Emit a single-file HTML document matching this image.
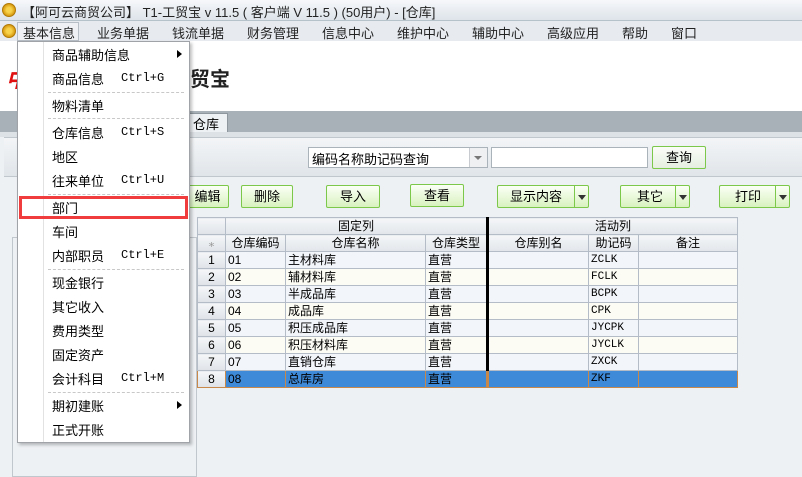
<!DOCTYPE html>
<html><head><meta charset="utf-8"><style>
*{margin:0;padding:0;box-sizing:border-box}
body{width:802px;height:477px;overflow:hidden;position:relative;font-family:"Liberation Sans","Noto Sans CJK SC","WenQuanYi Zen Hei",sans-serif;font-size:12px;color:#000;background:#eef1f4}
.a{position:absolute;white-space:nowrap}
.coin{width:14px;height:14px;border-radius:50%;background:radial-gradient(circle,#f7d24a 30%,#d89a10 70%);border:1px solid #b07a08}
.btn{position:absolute;height:23px;border:1px solid #7cc84a;border-radius:2px;background:linear-gradient(#fbfff6,#d8f2bf);text-align:center;line-height:21px;font-size:13px;white-space:nowrap}
.dd{position:absolute;top:0;right:0;width:14px;height:21px;border-left:1px solid #7cc84a}
.dd:after{content:"";position:absolute;left:3px;top:9px;border:4px solid transparent;border-top:5px solid #333}
table{border-collapse:collapse;position:absolute;left:197px;top:217px;font-size:12px;table-layout:fixed}
td{border:1px solid #b4bcc8;height:17px;line-height:15px;padding:0 2px;white-space:nowrap;overflow:hidden}
.h td{background:linear-gradient(#f4f6f8,#e2e6ea);text-align:center}
.r1 td{background:#f2f5fa}.r2 td{background:#fcfbf4}
.n{background:linear-gradient(#f4f6f8,#dfe3e8)!important;text-align:center}
.th{border-right:3px solid #000}
.sel td{background:#3f8ad8;border-color:#c8884a}
.mono{font-family:"Liberation Mono",monospace;font-size:11px}
.mi{position:absolute;left:52px;font-size:13px;white-space:nowrap}
.sc{position:absolute;left:121px;font-family:"Liberation Mono",monospace;font-size:12px;white-space:nowrap}
.sep{position:absolute;border-top:1px dashed #c8c8c8}
</style></head><body>
<div class="a" style="left:0;top:0;width:802px;height:21px;background:linear-gradient(#f6f8fa,#dde4ea);border-bottom:1px solid #b5c2ca"></div>
<div class="a coin" style="left:2px;top:3px"></div>
<div class="a" style="left:22px;top:2px;font-size:13px;color:#222">【阿可云商贸公司】 T1-工贸宝 v 11.5 ( 客户端 V 11.5 )  (50用户) - [仓库]</div>
<div class="a" style="left:0;top:21px;width:802px;height:20px;background:#e7ebf0"></div>
<div class="a coin" style="left:2px;top:24px"></div>
<div class="a" style="left:17px;top:22px;width:62px;height:19px;border:1px solid #b8bec6;background:#eef0f3"></div>
<div class="a" style="top:23px;left:0;font-size:13px;color:#222">
<span class="a" style="left:23px">基本信息</span><span class="a" style="left:97px">业务单据</span><span class="a" style="left:172px">钱流单据</span><span class="a" style="left:247px">财务管理</span><span class="a" style="left:322px">信息中心</span><span class="a" style="left:397px">维护中心</span><span class="a" style="left:472px">辅助中心</span><span class="a" style="left:547px">高级应用</span><span class="a" style="left:622px">帮助</span><span class="a" style="left:671px">窗口</span></div>
<div class="a" style="left:0;top:41px;width:802px;height:70px;background:#fff"></div>
<div class="a" style="left:6px;top:62px;color:#e01010;font-size:22px;font-weight:bold;font-style:italic">中</div>
<div class="a" style="left:190px;top:63px;font-size:20px;font-weight:bold;color:#222">贸宝</div>
<div class="a" style="left:0;top:111px;width:802px;height:21px;background:#a8b1b8"></div>
<div class="a" style="left:186px;top:113px;width:42px;height:19px;background:#eef1f4;border:1px solid #8e979e;border-bottom:none;font-size:13px;padding-left:6px">仓库</div>
<div class="a" style="left:0;top:132px;width:802px;height:5px;background:#dde2e6"></div>
<div class="a" style="left:4px;top:137px;width:798px;height:40px;background:linear-gradient(#f3f5f7,#e0e5e9);border-top:1px solid #c0c8ce;border-bottom:1px solid #c0c8ce"></div>
<div class="a" style="left:308px;top:147px;width:180px;height:21px;background:#fff;border:1px solid #aab2ba;font-size:13px;padding:1px 3px">编码名称助记码查询</div>
<div class="a" style="left:469px;top:148px;width:18px;height:19px;background:#eef0f2;border-left:1px solid #c8ccd0"></div>
<div class="a" style="left:474px;top:156px;border:4px solid transparent;border-top:4px solid #777"></div>
<div class="a" style="left:491px;top:147px;width:157px;height:21px;background:#fff;border:1px solid #aab2ba"></div>
<div class="btn" style="left:652px;top:146px;width:54px;background:linear-gradient(#fbfdf8,#e4eee0)">查询</div>
<div class="a" style="left:12px;top:237px;width:185px;height:240px;border:1px solid #c0c7cd;background:#eef1f4"></div>
<div class="btn" style="left:186px;top:185px;width:43px">编辑</div>
<div class="btn" style="left:241px;top:185px;width:52px">删除</div>
<div class="btn" style="left:326px;top:185px;width:54px">导入</div>
<div class="btn" style="left:410px;top:184px;width:54px">查看</div>
<div class="btn" style="left:497px;top:185px;width:92px;text-align:left;padding-left:12px">显示内容<span class="dd"></span></div>
<div class="btn" style="left:620px;top:185px;width:70px;text-align:left;padding-left:16px">其它<span class="dd"></span></div>
<div class="btn" style="left:719px;top:185px;width:71px;text-align:left;padding-left:15px">打印<span class="dd"></span></div>
<table>
<colgroup><col style="width:28px"><col style="width:60px"><col style="width:140px"><col style="width:62px"><col style="width:101px"><col style="width:50px"><col style="width:99px"></colgroup>
<tr class="h"><td class="n"></td><td colspan="3" class="th">固定列</td><td colspan="3">活动列</td></tr>
<tr class="h"><td class="n" style="color:#999">⁎</td><td>仓库编码</td><td>仓库名称</td><td class="th">仓库类型</td><td>仓库别名</td><td>助记码</td><td>备注</td></tr>
<tr class="r1"><td class="n">1</td><td>01</td><td>主材料库</td><td class="th">直营</td><td></td><td class="mono">ZCLK</td><td></td></tr>
<tr class="r2"><td class="n">2</td><td>02</td><td>辅材料库</td><td class="th">直营</td><td></td><td class="mono">FCLK</td><td></td></tr>
<tr class="r1"><td class="n">3</td><td>03</td><td>半成品库</td><td class="th">直营</td><td></td><td class="mono">BCPK</td><td></td></tr>
<tr class="r2"><td class="n">4</td><td>04</td><td>成品库</td><td class="th">直营</td><td></td><td class="mono">CPK</td><td></td></tr>
<tr class="r1"><td class="n">5</td><td>05</td><td>积压成品库</td><td class="th">直营</td><td></td><td class="mono">JYCPK</td><td></td></tr>
<tr class="r2"><td class="n">6</td><td>06</td><td>积压材料库</td><td class="th">直营</td><td></td><td class="mono">JYCLK</td><td></td></tr>
<tr class="r1"><td class="n">7</td><td>07</td><td>直销仓库</td><td class="th">直营</td><td></td><td class="mono">ZXCK</td><td></td></tr>
<tr class="sel"><td class="n">8</td><td>08</td><td>总库房</td><td class="th">直营</td><td></td><td class="mono">ZKF</td><td></td></tr>
</table>
<div class="a" style="left:17px;top:41px;width:173px;height:402px;background:#fff;border:1px solid #a0a4a8;box-shadow:2px 2px 3px rgba(0,0,0,.25)">
<div class="a" style="left:25px;top:0;width:1px;height:400px;background:#e2e2e2"></div>
</div>
<span class="mi" style="top:45px">商品辅助信息</span><span class="a" style="left:177px;top:50px;border:4px solid transparent;border-left:5px solid #000"></span>
<span class="mi" style="top:69px">商品信息</span><span class="sc" style="top:71px">Ctrl+G</span>
<div class="sep" style="top:92px;left:48px;width:136px"></div>
<span class="mi" style="top:96px">物料清单</span>
<div class="sep" style="top:118px;left:48px;width:136px"></div>
<span class="mi" style="top:123px">仓库信息</span><span class="sc" style="top:125px">Ctrl+S</span>
<span class="mi" style="top:147px">地区</span>
<span class="mi" style="top:171px">往来单位</span><span class="sc" style="top:173px">Ctrl+U</span>
<div class="sep" style="top:194px;left:48px;width:136px"></div>
<div class="a" style="left:19px;top:196px;width:169px;height:23px;border:3px solid #f03c3c"></div>
<span class="mi" style="top:198px">部门</span>
<span class="mi" style="top:222px">车间</span>
<span class="mi" style="top:246px">内部职员</span><span class="sc" style="top:248px">Ctrl+E</span>
<div class="sep" style="top:269px;left:48px;width:136px"></div>
<span class="mi" style="top:273px">现金银行</span>
<span class="mi" style="top:297px">其它收入</span>
<span class="mi" style="top:321px">费用类型</span>
<span class="mi" style="top:345px">固定资产</span>
<span class="mi" style="top:369px">会计科目</span><span class="sc" style="top:371px">Ctrl+M</span>
<div class="sep" style="top:392px;left:48px;width:136px"></div>
<span class="mi" style="top:396px">期初建账</span><span class="a" style="left:177px;top:401px;border:4px solid transparent;border-left:5px solid #000"></span>
<span class="mi" style="top:420px">正式开账</span>
</body></html>
